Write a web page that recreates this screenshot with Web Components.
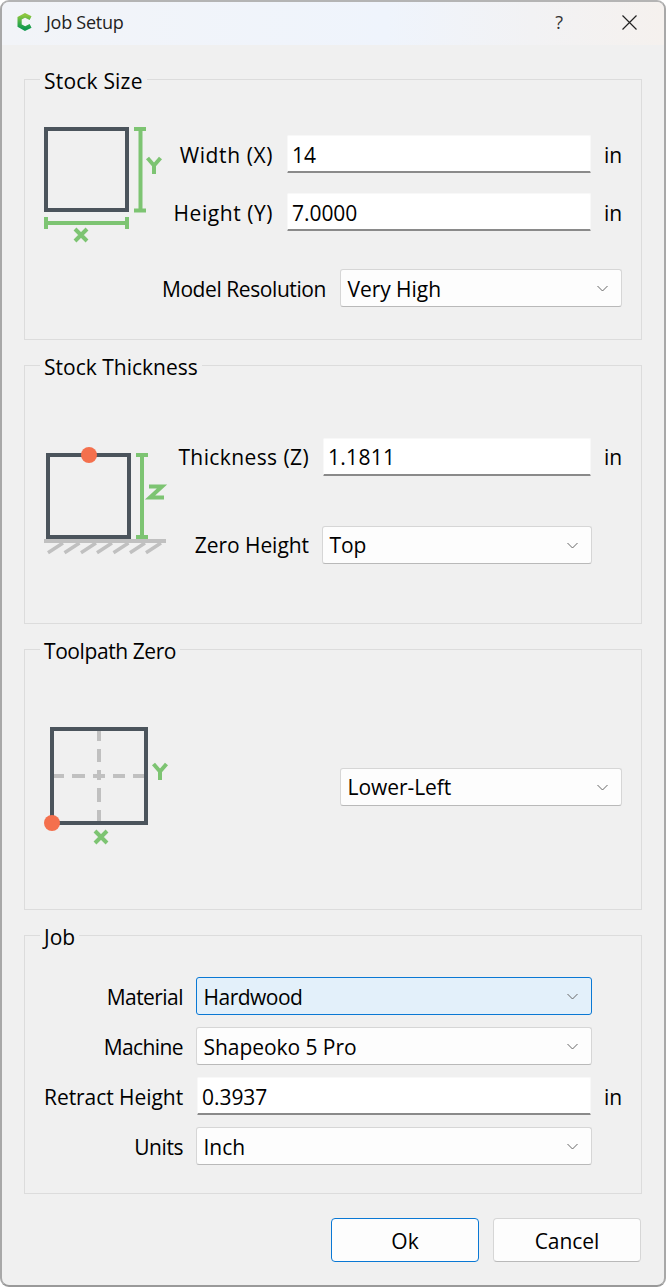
<!DOCTYPE html>
<html lang="en"><head><meta charset="utf-8"><title>Job Setup</title>
<style>
html,body{margin:0;padding:0;background:#fff;height:100%}
body{font-family:"Open Sans","Liberation Sans",sans-serif;font-size:21px;letter-spacing:-.05px;color:#000}
</style></head>
<body>
<x-window>
  <x-titlebar slot="title">Job Setup</x-titlebar>

  <x-group label="Stock Size" ls=".2" h="261" pt="47" style="--ty:2px">
    <x-row>
      <x-icon-stock></x-icon-stock>
      <x-form cols="1fr 304px 31px" mt="8">
        <x-label style="letter-spacing:.6px">Width (X)</x-label><x-field>14</x-field><x-unit>in</x-unit>
        <x-label style="letter-spacing:.55px">Height (Y)</x-label><x-field>7.0000</x-field><x-unit>in</x-unit>
      </x-form>
    </x-row>
    <x-end mt="26"><x-label style="letter-spacing:-.42px">Model Resolution</x-label><x-combo w="282">Very High</x-combo></x-end>
  </x-group>

  <x-group label="Stock Thickness" ls="0" h="259" pt="72">
    <x-row>
      <x-icon-thick></x-icon-thick>
      <x-form cols="1fr 268px 31px" gap="50">
        <x-label style="letter-spacing:.4px">Thickness (Z)</x-label><x-field style="letter-spacing:.3px">1.1811</x-field><x-unit>in</x-unit>
        <x-label>Zero Height</x-label><x-combo inset>Top</x-combo><span></span>
      </x-form>
    </x-row>
  </x-group>

  <x-group label="Toolpath Zero" ls="-.42" h="261" pt="77">
    <x-row>
      <x-icon-zero></x-icon-zero>
      <x-end mt="41" grow><x-combo w="282">Lower-Left</x-combo></x-end>
    </x-row>
  </x-group>

  <x-group label="Job" ls="0" h="259" pt="41" style="--ty:2px">
    <x-form cols="153px 394px 31px" gap="12">
      <x-label style="letter-spacing:-.55px">Material</x-label><x-combo inset focused style="letter-spacing:-.5px">Hardwood</x-combo><span></span>
      <x-label style="letter-spacing:-.6px">Machine</x-label><x-combo inset>Shapeoko 5 Pro</x-combo><span></span>
      <x-label>Retract Height</x-label><x-field>0.3937</x-field><x-unit>in</x-unit>
      <x-label style="letter-spacing:-.45px">Units</x-label><x-combo inset>Inch</x-combo><span></span>
    </x-form>
  </x-group>

  <x-actions style="--ty:2px">
    <x-button primary>Ok</x-button>
    <x-button>Cancel</x-button>
  </x-actions>
</x-window>

<script>
function def(name, css, html, init){
  customElements.define(name, class extends HTMLElement{
    constructor(){super();const r=this.attachShadow({mode:"open"});
      r.innerHTML="<style>"+css+"</style>"+html;}
    connectedCallback(){ if(init) init(this); }
  });
}
const G="#7dc472",D="#4b545c",O="#f4704d",H="#c0c0c0";

def("x-window",`
  :host{display:block;box-sizing:border-box;height:1287px;background:#f0f0f0;
    border:2px solid #a8a8a8;border-top-color:#b4b4b4;border-bottom-color:#999;border-radius:9px;overflow:hidden}
  main{display:flex;flex-direction:column;gap:25px;padding:34px 22px 0}`,
  `<slot name="title"></slot><main><slot></slot></main>`);

def("x-titlebar",`
  :host{display:flex;align-items:center;box-sizing:border-box;height:43px;padding-bottom:3px;background:linear-gradient(90deg,#f2f4f8,#eff4fc 58%,#f2f2f4 80%,#f5f1ee);font-size:18px;letter-spacing:-.25px;color:#222}
  svg{display:block;flex:none}
  .logo{margin-left:15px;margin-right:13px}
  .t{flex:1}
  .q{font-size:18px;color:#333;margin-right:59px;letter-spacing:0}
  .x{margin-right:27px}`,
  `<svg class="logo" width="16" height="18" viewBox="0 0 16 18"><defs><linearGradient id="g" x1="0" y1="0" x2="0" y2="1"><stop offset="0" stop-color="#8cc63f"/><stop offset=".55" stop-color="#3fae49"/><stop offset="1" stop-color="#119a4f"/></linearGradient></defs><path d="M13.6 5.2 8 2.400 2.600 5.200v7.400L8 15.600l5.600-2.800" fill="none" stroke="url(#g)" stroke-width="4.2"/></svg>
   <span class="t"><slot></slot></span><span class="q">?</span>
   <svg class="x" width="15" height="15" viewBox="0 0 15 15"><path d="M.5.5l14 14M14.500.5l-14 14" stroke="#222" stroke-width="1.2" fill="none"/></svg>`);

def("x-group",`
  :host{display:block;position:relative;box-sizing:border-box;border:1px solid #dcdcdc;padding:0 19px;height:var(--h);padding-top:var(--pt)}
  .l{position:absolute;left:15px;top:-13px;line-height:28px;padding:0 4px;background:#f0f0f0;white-space:nowrap}`,
  `<div class="l"></div><slot></slot>`,
  el=>{const l=el.shadowRoot.querySelector(".l");l.textContent=el.getAttribute("label");
    l.style.letterSpacing=el.getAttribute("ls")+"px";
    el.style.setProperty("--h",el.getAttribute("h")+"px");el.style.setProperty("--pt",el.getAttribute("pt")+"px");});

def("x-row",`:host{display:flex;align-items:flex-start}`,`<slot></slot>`);

def("x-form",`
  :host{display:grid;flex:1;align-items:center;row-gap:var(--gap,20px);grid-template-columns:var(--cols)}`,
  `<slot></slot>`,
  el=>{el.style.setProperty("--cols",el.getAttribute("cols"));
    if(el.getAttribute("gap"))el.style.setProperty("--gap",el.getAttribute("gap")+"px");
    if(el.getAttribute("mt"))el.style.marginTop=el.getAttribute("mt")+"px";});

def("x-label",`:host{display:block;text-align:right;padding-right:14px;white-space:nowrap;padding-top:var(--ty,0)}`,`<slot></slot>`);
def("x-unit",`:host{display:block;padding-left:13px;padding-top:var(--ty,0)}`,`<slot></slot>`);

def("x-end",`:host{display:flex;justify-content:flex-end;align-items:center}`,`<slot></slot>`,
  el=>{el.style.marginTop=el.getAttribute("mt")+"px";if(el.hasAttribute("grow"))el.style.flex="1";});

def("x-field",`
  :host{display:flex;align-items:center;box-sizing:border-box;height:38px;background:#fff;padding:var(--ty,0) 4px 0;
    border:1px solid #f8f8f8;border-bottom:2px solid #8a8a8a;border-radius:2px 2px 1px 1px}`,
  `<slot></slot>`);

def("x-combo",`
  :host{display:flex;align-items:center;justify-content:space-between;box-sizing:border-box;height:38px;padding:0 13px 0 6.5px;
    background:#fdfdfd;border:1px solid #d6d6d6;border-bottom-color:#b9b9b9;border-radius:3px}
  :host([focused]){background:#e3f0fa;border-color:#0a78d4}
  :host([inset]){margin:0 -1px}
  span{padding-top:var(--ty,0)}
  svg{display:block;flex:none}`,
  `<span><slot></slot></span><svg width="11" height="7" viewBox="0 0 11 7"><path d="M.5 1l5 5 5-5" fill="none" stroke="#666" stroke-width="1"/></svg>`,
  el=>{if(el.getAttribute("w"))el.style.width=el.getAttribute("w")+"px";});

def("x-actions",`:host{display:flex;justify-content:flex-end;gap:14px;margin:-1px 1px 0 0}`,`<slot></slot>`);

def("x-button",`
  :host{display:flex;align-items:center;justify-content:center;box-sizing:border-box;width:148px;height:44px;padding-top:var(--ty,0);
    background:#fdfdfd;border:1px solid #d6d6d6;border-bottom-color:#b9b9b9;border-radius:4px}
  :host([primary]){border-color:#0a78d4}`,
  `<slot></slot>`);

const letterY=(x,y)=>`<path d="M${x} ${y}l6.500 7.500L${x+13} ${y}M${x+6.5} ${y+7}v9" fill="none" stroke="${G}" stroke-width="4"/>`;
const letterX=(cx,cy)=>`<path d="M${cx-6} ${cy-6}l12 12M${cx+6} ${cy-6}l-12 12" fill="none" stroke="${G}" stroke-width="4"/>`;

def("x-icon-stock",`:host{display:block;flex:none;width:116px;height:116px}svg{display:block;overflow:visible}`,
 `<svg width="116" height="116" viewBox="44 127 116 116">
   <rect x="46" y="129" width="81" height="81" fill="none" stroke="${D}" stroke-width="4"/>
   <path d="M140.500 127v85M134 129h12M134 210.500h12" fill="none" stroke="${G}" stroke-width="4"/>
   ${letterY(147.5,158)}
   <path d="M44 223h85M46 217v12M127 217v12" fill="none" stroke="${G}" stroke-width="4"/>
   ${letterX(81,235)}
 </svg>`);

def("x-icon-thick",`:host{display:block;flex:none;width:122px;height:110px;margin-top:8px}svg{display:block;overflow:visible}`,
 `<svg width="122" height="110" viewBox="44 446 122 110">
   <rect x="48" y="455" width="81" height="82" fill="none" stroke="${D}" stroke-width="4"/>
   <circle cx="89" cy="455" r="8" fill="${O}"/>
   <path d="M142 453v86M136 455h12M136 537h12" fill="none" stroke="${G}" stroke-width="4"/>
   <path d="M149 486.500h13l-12 11h14" fill="none" stroke="${G}" stroke-width="4"/>
   <path d="M44 541h122" stroke="${H}" stroke-width="4"/>
   <path d="M48 552.700l15-9.700M64.500 552.700l15-9.700M81 552.700l15-9.700M97 552.700l15-9.700M113.500 552.700l15-9.700M130 552.700l15-9.700M146 552.700l15-9.700" stroke="${H}" stroke-width="3.500" fill="none"/>
 </svg>`);

def("x-icon-zero",`:host{display:block;flex:none;width:124px;height:118px}svg{display:block;overflow:visible}`,
 `<svg width="124" height="118" viewBox="44 727 124 118">
   <path d="M99 731v10M99 749v13M99 770v10M99 788v14M99 810v11M54 776h10M72 776h13M93 776h12M113 776h12M133 776h11" stroke="${H}" stroke-width="4" fill="none"/>
   <rect x="52" y="729" width="94" height="94" fill="none" stroke="${D}" stroke-width="4"/>
   <circle cx="52" cy="823" r="8" fill="${O}"/>
   ${letterY(153.5,764)}
   ${letterX(101,837)}
 </svg>`);
</script>
</body></html>
